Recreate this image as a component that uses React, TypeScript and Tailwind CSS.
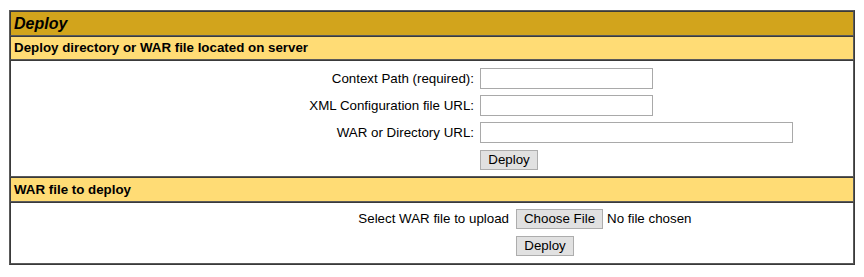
import React from "react";

const font = "font-['Liberation_Sans',Arial,sans-serif]";

function Btn({ children, w }: { children: React.ReactNode; w: string }) {
  return (
    <button
      type="button"
      className={`${w} h-[20px] bg-[#e1e1e1] border border-[#adadad] text-[13.33px] leading-none text-black flex items-center justify-center`}
    >
      {children}
    </button>
  );
}

function TextInput({ w }: { w: string }) {
  return <input type="text" className={`${w} h-[21px] border border-[#a9a9a9] bg-white outline-none`} />;
}

export default function App() {
  return (
    <div className={`bg-white w-[864px] h-[277px] pt-[10px] pl-[9px] ${font} text-black`}>
      <div className="w-[846px] border border-t-[#5a5a5a] border-l-[#5a5a5a] border-r-[#3a3a3a] border-b-[#3a3a3a]">
        {/* Title */}
        <div className="border border-t-[#3a3a3a] border-l-[#3a3a3a] border-r-[#5a5a5a] border-b-[#5a5a5a] bg-[#D2A41C] h-[25px] px-[3px] flex items-center">
          <span className="text-[16px] font-bold italic leading-none">Deploy</span>
        </div>
        {/* Header 1 */}
        <div className="border border-t-[#3a3a3a] border-l-[#3a3a3a] border-r-[#5a5a5a] border-b-[#5a5a5a] bg-[#FFDC75] h-[24px] px-[3px] flex items-center">
          <span className="text-[13.33px] font-bold leading-none">Deploy directory or WAR file located on server</span>
        </div>
        {/* Body 1 */}
        <div className="border border-t-[#3a3a3a] border-l-[#3a3a3a] border-r-[#5a5a5a] border-b-[#5a5a5a] h-[117px] pt-[7px]">
          <div className="grid grid-cols-[463px_1fr] gap-x-[6px] gap-y-[6px] text-[13.33px]">
            <div className="h-[21px] flex items-center justify-end">Context Path (required):</div>
            <div className="h-[21px]"><TextInput w="w-[173px]" /></div>
            <div className="h-[21px] flex items-center justify-end">XML Configuration file URL:</div>
            <div className="h-[21px]"><TextInput w="w-[173px]" /></div>
            <div className="h-[21px] flex items-center justify-end">WAR or Directory URL:</div>
            <div className="h-[21px]"><TextInput w="w-[313px]" /></div>
            <div />
            <div className="pt-[1px]"><Btn w="w-[58px]">Deploy</Btn></div>
          </div>
        </div>
        {/* Header 2 */}
        <div className="border border-t-[#3a3a3a] border-l-[#3a3a3a] border-r-[#5a5a5a] border-b-[#5a5a5a] bg-[#FFDC75] h-[25px] px-[3px] flex items-center">
          <span className="text-[13.33px] font-bold leading-none">WAR file to deploy</span>
        </div>
        {/* Body 2 */}
        <div className="border border-t-[#3a3a3a] border-l-[#3a3a3a] border-r-[#5a5a5a] border-b-[#5a5a5a] h-[62px] pt-[6px]">
          <div className="grid grid-cols-[498px_1fr] gap-x-[7px] gap-y-[7px] text-[13.33px]">
            <div className="h-[20px] flex items-center justify-end">Select WAR file to upload</div>
            <div className="h-[20px] flex items-center gap-[4px]">
              <Btn w="w-[87px]">Choose File</Btn>
              <span>No file chosen</span>
            </div>
            <div />
            <div><Btn w="w-[58px]">Deploy</Btn></div>
          </div>
        </div>
      </div>
    </div>
  );
}
